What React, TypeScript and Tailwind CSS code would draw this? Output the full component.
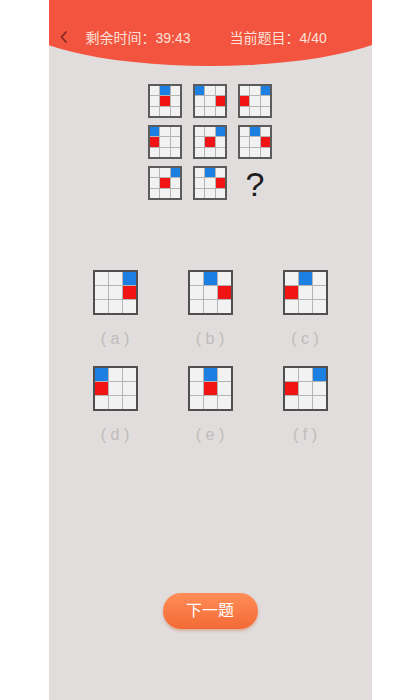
import React from "react";

type Pos = [number, number];

function Box({ blue, red, size }: { blue: Pos; red: Pos; size: "sm" | "lg" }) {
  const cells = [];
  for (let r = 0; r < 3; r++) {
    for (let c = 0; c < 3; c++) {
      let cls = "bg-[#f2f2f2]";
      if (blue[0] === r && blue[1] === c) cls = "bg-[#1c7fe2]";
      if (red[0] === r && red[1] === c) cls = "bg-[#f01414]";
      cells.push(<div key={`${r}-${c}`} className={cls} />);
    }
  }
  return (
    <div
      className={
        size === "sm"
          ? "w-[34px] h-[34px] border-2 border-[#5b5b5b] grid grid-cols-3 grid-rows-3 gap-[1px] bg-[#b4b4b4]"
          : "w-[45px] h-[45px] border-2 border-[#4f4f4f] grid grid-cols-3 grid-rows-3 gap-[1px] bg-[#b4b4b4]"
      }
    >
      {cells}
    </div>
  );
}

const puzzle: { blue: Pos; red: Pos }[] = [
  { blue: [0, 1], red: [1, 1] },
  { blue: [0, 0], red: [1, 2] },
  { blue: [0, 2], red: [1, 0] },
  { blue: [0, 0], red: [1, 0] },
  { blue: [0, 2], red: [1, 1] },
  { blue: [0, 1], red: [1, 2] },
  { blue: [0, 2], red: [1, 1] },
  { blue: [0, 1], red: [1, 2] },
];

const options: { label: string; blue: Pos; red: Pos }[] = [
  { label: "a", blue: [0, 2], red: [1, 2] },
  { label: "b", blue: [0, 1], red: [1, 2] },
  { label: "c", blue: [0, 1], red: [1, 0] },
  { label: "d", blue: [0, 0], red: [1, 0] },
  { label: "e", blue: [0, 1], red: [1, 1] },
  { label: "f", blue: [0, 2], red: [1, 0] },
];

function Option({ label, blue, red }: { label: string; blue: Pos; red: Pos }) {
  return (
    <div className="flex flex-col items-center w-[45px]">
      <Box blue={blue} red={red} size="lg" />
      <div className="mt-[14px] h-[20px] leading-[20px] text-[16px] text-[#bfbcbb] whitespace-pre">
        {`( ${label} )`}
      </div>
    </div>
  );
}

export default function App() {
  return (
    <div
      className="w-[420px] h-[700px] bg-white flex justify-center"
      style={{ fontFamily: '"Liberation Sans", "Noto Sans CJK SC", sans-serif' }}
    >
      <div className="w-[323px] h-[700px] bg-[#e0dddc] flex flex-col items-center">
        {/* header */}
        <div className="w-full h-[66px] overflow-hidden flex justify-center">
          <div className="w-[400px] h-[66px] shrink-0 bg-[#f2543f] rounded-b-[200px_51px] flex justify-center">
            <div className="w-[323px] pt-[28px] flex items-start">
              <svg width="10" height="14" viewBox="0 0 10 14" className="ml-[10px] mt-[2px]">
                <path d="M7.5 1.5 L2.5 7 L7.5 12.5" fill="none" stroke="#7d2622" strokeWidth="1.6" />
              </svg>
              <div className="ml-[17px] text-[14px] leading-[20px] text-[#fde0d8]">剩余时间：39:43</div>
              <div className="ml-[39px] text-[14px] leading-[20px] text-[#fde0d8]">当前题目：4/40</div>
            </div>
          </div>
        </div>

        {/* puzzle */}
        <div className="mt-[18px] grid grid-cols-3 gap-x-[11px] gap-y-[7px]">
          {puzzle.map((p, i) => (
            <Box key={i} blue={p.blue} red={p.red} size="sm" />
          ))}
          <div className="w-[34px] h-[34px] flex items-center justify-center text-[34px] leading-none text-[#1e1e1e] pt-[2px]">
            ?
          </div>
        </div>

        {/* options */}
        <div className="mt-[70px] flex gap-x-[50px]">
          {options.slice(0, 3).map((o) => (
            <Option key={o.label} {...o} />
          ))}
        </div>
        <div className="mt-[17px] flex gap-x-[50px]">
          {options.slice(3).map((o) => (
            <Option key={o.label} {...o} />
          ))}
        </div>

        {/* next button */}
        <button className="mt-[148px] w-[95px] h-[36px] rounded-full bg-gradient-to-b from-[#ff8d57] to-[#f36935] shadow-[0_2px_3px_rgba(200,90,40,0.35)] text-white text-[16px] flex items-center justify-center">
          下一题
        </button>
      </div>
    </div>
  );
}
